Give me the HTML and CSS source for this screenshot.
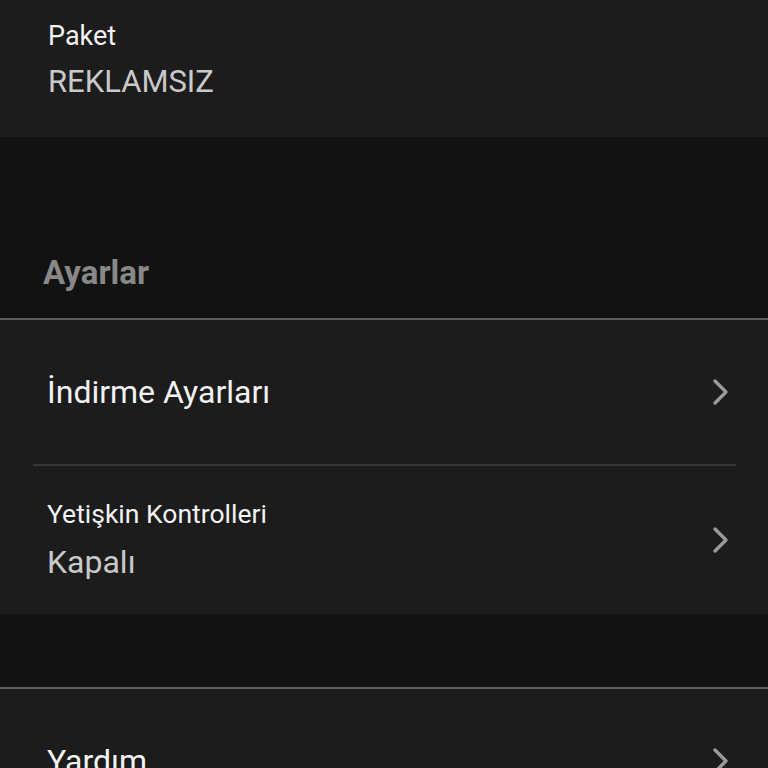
FILE: index.html
```html
<!DOCTYPE html>
<html lang="tr">
<head>
    <meta charset="UTF-8">
    <meta name="viewport" content="width=device-width, initial-scale=1.0">
    <title>Hesap</title>
    <link rel="stylesheet" href="styles.css">
</head>
<body>
<div class="screen">
    <div class="card plan">
        <div class="label">Paket</div>
        <div class="value">REKLAMSIZ</div>
    </div>

    <div class="band settings-band">
        <h2>Ayarlar</h2>
    </div>

    <div class="card list">
        <div class="row">
            <div class="row-text">
                <div class="title">İndirme Ayarları</div>
            </div>
            <svg class="chevron" viewBox="0 0 18 28"><path d="M3 3 L14 14 L3 25"/></svg>
        </div>
        <div class="divider"></div>
        <div class="row tall">
            <div class="row-text">
                <div class="label">Yetişkin Kontrolleri</div>
                <div class="value">Kapalı</div>
            </div>
            <svg class="chevron" viewBox="0 0 18 28"><path d="M3 3 L14 14 L3 25"/></svg>
        </div>
    </div>

    <div class="band small-band"></div>

    <div class="card list">
        <div class="row">
            <div class="row-text">
                <div class="title">Yardım</div>
            </div>
            <svg class="chevron" viewBox="0 0 18 28"><path d="M3 3 L14 14 L3 25"/></svg>
        </div>
    </div>
</div>
</body>
</html>
```

FILE: styles.css
```css
body {
    margin: 0;
    background-color: #121212;
    font-family: Roboto, "Noto Sans", sans-serif;
    overflow: hidden;
}

.screen {
    width: 768px;
    height: 768px;
    overflow: hidden;
}

.card {
    background-color: #1c1c1c;
}

.plan {
    padding: 20px 48px 35px 48px;
}

.label {
    font-size: 27px;
    line-height: 32px;
    color: #f2f2f2;
}

.value {
    font-size: 31px;
    line-height: 40px;
    color: #c9c9c9;
}

.plan .value {
    margin-top: 10px;
}

.band {
    background-color: #121212;
}

.settings-band {
    height: 181px;
    box-sizing: border-box;
    padding: 116px 43px 0 43px;
}

.settings-band h2 {
    margin: 0;
    font-size: 33px;
    line-height: 40px;
    font-weight: bold;
    color: #888;
}

.small-band {
    height: 73px;
}

.list {
    border-top: 2px solid #5e5e5e;
}

.row {
    display: flex;
    align-items: center;
    justify-content: space-between;
    height: 144px;
    padding: 0 38px 0 47px;
}

.row.tall {
    height: 148px;
}

.row .title {
    font-size: 32px;
    line-height: 40px;
    color: #f2f2f2;
}

.row .label {
    font-size: 26.5px;
}

.row .value {
    font-size: 32px;
    margin-top: 12px;
}

.divider {
    height: 2px;
    margin: 0 32px 0 33px;
    background-color: #363636;
}

.chevron {
    width: 18px;
    height: 28px;
    fill: none;
    stroke: #9a9a9a;
    stroke-width: 3.4;
    stroke-linecap: round;
    stroke-linejoin: round;
}
```
